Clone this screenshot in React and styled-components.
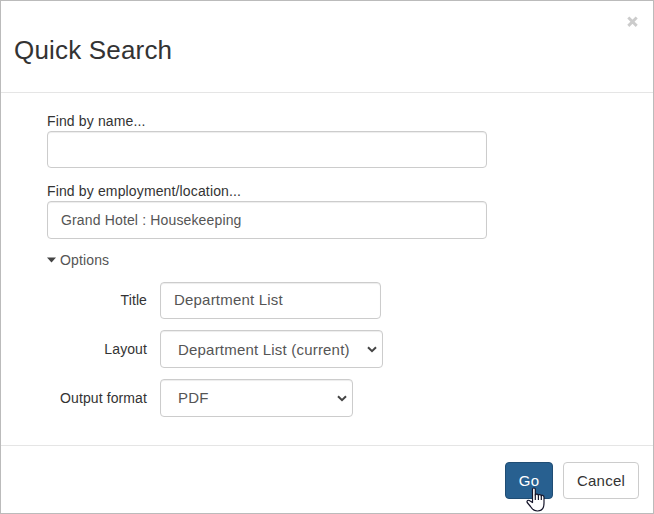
import React from "react";
import styled, { createGlobalStyle } from "styled-components";

const GlobalStyle = createGlobalStyle`
  * { box-sizing: border-box; }
  body { margin: 0; background: #fff; font-family: "Liberation Sans", Arial, sans-serif; }
`;

const Dialog = styled.section`
  display: flex;
  flex-direction: column;
  width: 654px;
  height: 514px;
  border: 1px solid #bbb;
  background: #fff;
  color: #333;
  font-size: 14px;
`;

const Header = styled.header`
  display: flex;
  justify-content: space-between;
  align-items: flex-start;
  height: 92px;
  padding: 15px 15px 0 13px;
  border-bottom: 1px solid #e5e5e5;
`;

const Heading = styled.h1`
  margin: 19px 0 0;
  font-size: 26px;
  font-weight: 400;
  line-height: 30px;
  letter-spacing: 0.18px;
`;

const CloseButton = styled.button`
  display: flex;
  padding: 0;
  border: 0;
  background: none;
  color: #ccc;
`;

const Body = styled.div`
  flex: 1;
  padding: 20px 46px 0;
`;

const Field = styled.div`
  display: flex;
  flex-direction: column;
  margin-bottom: ${(p) => p.$gap}px;
`;

const FieldLabel = styled.label`
  height: 18px;
  line-height: 17px;
  letter-spacing: 0.14px;
`;

const Control = styled.div`
  display: flex;
  align-items: center;
  justify-content: space-between;
  width: ${(p) => p.$width}px;
  height: ${(p) => p.$height || 38}px;
  padding: 0 5px ${(p) => p.$lift || 0}px ${(p) => p.$inset || 13}px;
  border: 1px solid #ccc;
  border-radius: 4px;
  box-shadow: inset 0 1px 1px rgba(0, 0, 0, 0.075);
  color: #555;
  font-size: ${(p) => p.$size || 15}px;
  letter-spacing: ${(p) => p.$spacing || 0.2}px;
  line-height: 20px;
  white-space: nowrap;
`;

const OptionsToggle = styled.div`
  display: flex;
  align-items: center;
  gap: 4px;
  height: 18px;
  margin-bottom: 13px;
  color: #555;
  letter-spacing: 0.14px;
`;

const OptionList = styled.div`
  display: grid;
  grid-template-columns: 100px auto;
  column-gap: 13px;
  row-gap: 11px;
  justify-content: start;
  align-items: center;
`;

const OptionLabel = styled.label`
  text-align: right;
  line-height: 18px;
  letter-spacing: 0.1px;
  padding-bottom: ${(p) => p.$lift || 0}px;
`;

const SelectedText = styled.span`
  padding-top: ${(p) => p.$drop || 0}px;
`;

const Footer = styled.footer`
  display: flex;
  justify-content: flex-end;
  gap: 10px;
  height: 68px;
  padding: 16px 14px 0;
  border-top: 1px solid #e5e5e5;
`;

const Button = styled.button`
  position: relative;
  width: ${(p) => p.$width}px;
  height: 37px;
  padding: 0;
  border: 1px solid ${(p) => (p.$primary ? "#204d74" : "#ccc")};
  border-radius: 4px;
  background: ${(p) => (p.$primary ? "#286090" : "#fff")};
  color: ${(p) => (p.$primary ? "#fff" : "#333")};
  font-family: inherit;
  font-size: 15px;
  letter-spacing: 0.25px;
  line-height: 20px;
`;

const Pointer = styled.svg`
  position: absolute;
  left: 20px;
  top: 24px;
`;

const Chevron = () => (
  <svg width="10" height="7" viewBox="0 0 10 7" fill="none">
    <path d="M1 1.200 5 5.200 9 1.200" stroke="#444" strokeWidth="2" />
  </svg>
);

const HandCursor = () => (
  <Pointer width="20" height="26" viewBox="0 0 20 26">
    <path
      d="M6.500 15.500V2.500c0-2 2.800-2 2.800 0V8c.3-1.300 2.900-1.200 3.100.300.300-1.100 2.700-1 2.900.500.300-1 2.700-.6 2.700 1.400V16c0 4.500-2 8-6.500 8-4 0-5.500-2-7-4.500L1.200 15.500c-.8-2 1.200-2.800 2.600-1.800z"
      fill="#fff"
      stroke="#15152a"
      strokeWidth="1.200"
      strokeLinejoin="round"
    />
    <path d="M9.300 7.500V13M12.400 8.200V13M15.300 8.800V13" stroke="#15152a" strokeWidth="1.200" />
  </Pointer>
);

export default function App() {
  return (
    <>
      <GlobalStyle />
      <Dialog>
        <Header>
          <Heading>Quick Search</Heading>
          <CloseButton aria-label="Close">
            <svg width="11" height="11" viewBox="0 0 11 11">
              <path d="M1.300 1.500 9.700 9.900M9.700 1.500 1.300 9.900" stroke="currentColor" strokeWidth="2.900" />
            </svg>
          </CloseButton>
        </Header>
        <Body>
          <Field $gap={15}>
            <FieldLabel>Find by name...</FieldLabel>
            <Control $width={440} $height={37} />
          </Field>
          <Field $gap={12}>
            <FieldLabel>Find by employment/location...</FieldLabel>
            <Control $width={440} $size={14} $spacing={0.15}>Grand Hotel : Housekeeping</Control>
          </Field>
          <OptionsToggle>
            <svg width="9" height="6" viewBox="0 0 9 6">
              <path d="M0 .5h9L4.500 5.500z" fill="#444" />
            </svg>
            Options
          </OptionsToggle>
          <OptionList>
            <OptionLabel $lift={2}>Title</OptionLabel>
            <Control $width={221} $height={37} $lift={2}>Department List</Control>
            <OptionLabel>Layout</OptionLabel>
            <Control $width={223} $inset={17}>
              <SelectedText $drop={2}>Department List (current)</SelectedText>
              <Chevron />
            </Control>
            <OptionLabel>Output format</OptionLabel>
            <Control $width={193} $inset={17}>
              <SelectedText>PDF</SelectedText>
              <Chevron />
            </Control>
          </OptionList>
        </Body>
        <Footer>
          <Button $width={48} $primary>
            Go
            <HandCursor />
          </Button>
          <Button $width={76}>Cancel</Button>
        </Footer>
      </Dialog>
    </>
  );
}
